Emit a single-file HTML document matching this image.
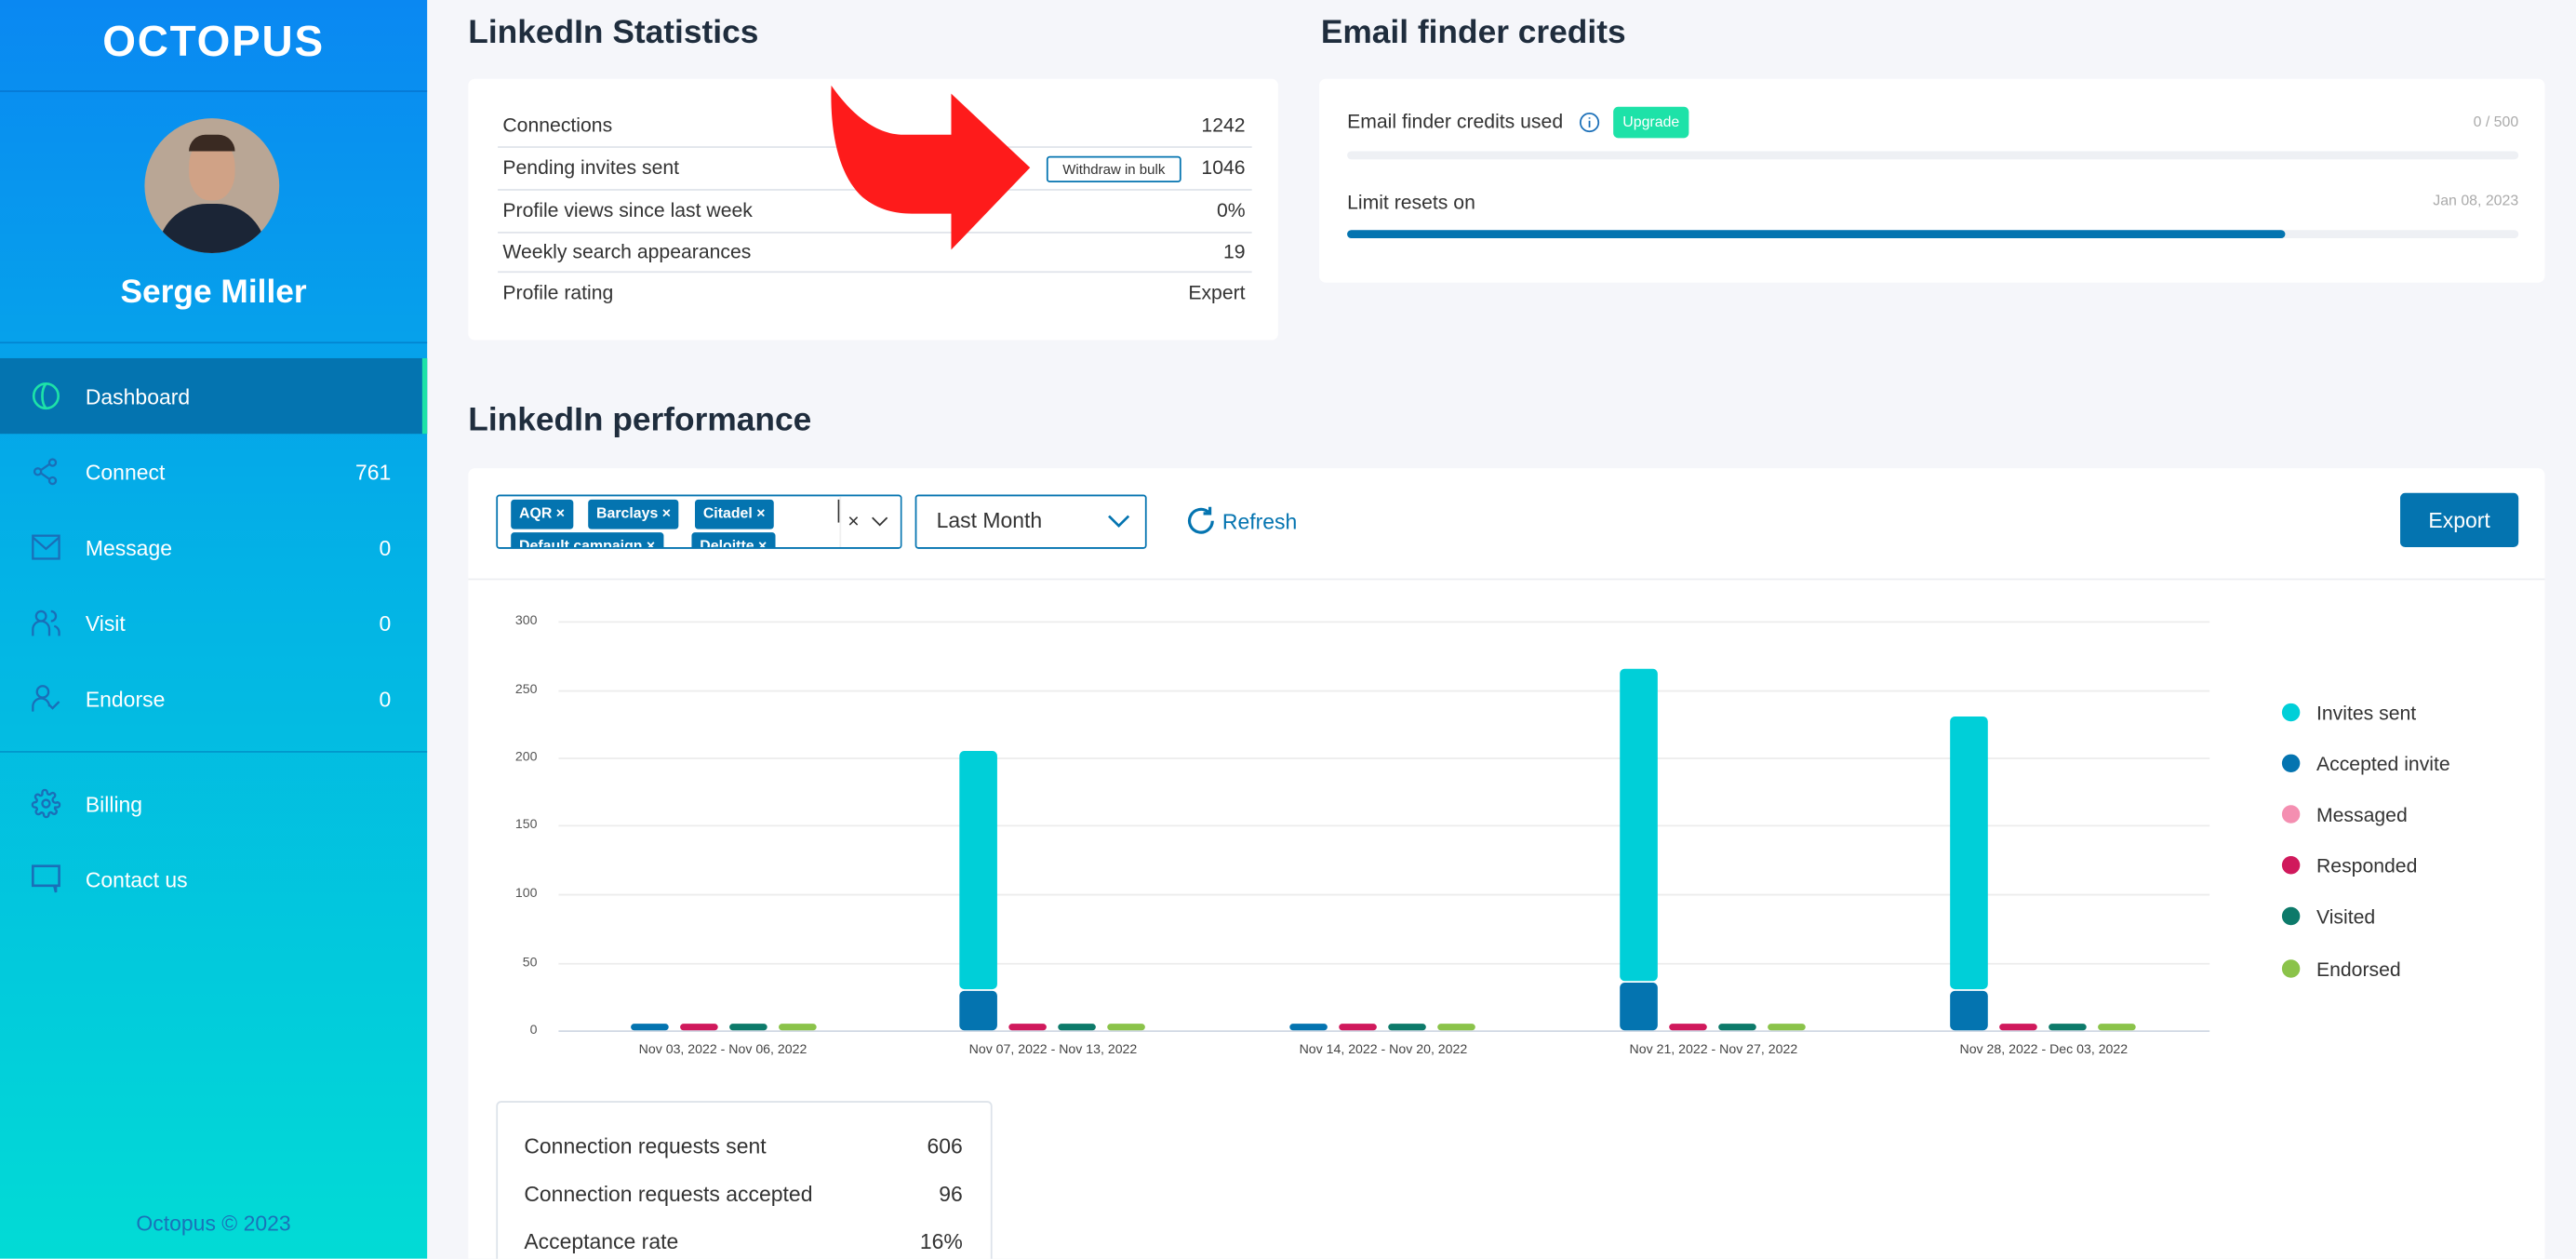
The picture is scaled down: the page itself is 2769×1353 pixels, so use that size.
<!DOCTYPE html>
<html><head><meta charset="utf-8"><style>
*{margin:0;padding:0;box-sizing:border-box}
html,body{width:2769px;height:1353px;overflow:hidden;background:#f5f6fa;font-family:"Liberation Sans",sans-serif}
#w{position:absolute;left:0;top:0;width:1568px;height:766px;overflow:hidden;transform:scale(1.76594);transform-origin:0 0}
.a{position:absolute;white-space:nowrap}
#sb{position:absolute;left:0;top:0;width:260px;height:766px;background:linear-gradient(180deg,#0a88f2 0%,#03b2e6 45%,#02dbd5 100%)}
.hl{position:absolute;left:0;width:260px;height:1px;background:rgba(0,80,160,.35)}
.ni{color:#fff;font-size:13px}
.nc{color:#fff;font-size:13px;right:22px}
.ic{position:absolute;left:19px}
.card{position:absolute;background:#fff;border-radius:4px}
.t{color:#1f2d3d;font-size:20px;font-weight:bold}
.r{color:#333;font-size:12px}
.rl{position:absolute;left:303px;width:459px;height:1px;background:#e0e4ea}
.g{position:absolute;left:340px;width:1005px;height:1px;background:#ececec}
.yl{position:absolute;width:30px;text-align:right;left:297px;font-size:8px;color:#555}
.xl{position:absolute;font-size:8px;color:#444;width:160px;text-align:center}
.b{position:absolute;width:23px;border-radius:3px}
.tag{position:absolute;height:18px;background:#0474b0;color:#fff;font-size:9px;font-weight:bold;border-radius:2px;padding:3px 5px}
.lg{position:absolute;left:1389px;width:11px;height:11px;border-radius:50%}
.lt{position:absolute;left:1410px;font-size:12px;color:#333}
</style></head><body><div id="w">
<div id="sb">
<div class="a" style="left:0;width:260px;text-align:center;top:10px;color:#fff;font-size:26px;font-weight:bold;letter-spacing:1px">OCTOPUS</div>
<div class="hl" style="top:55px"></div>
<div style="position:absolute;left:88px;top:72px;width:82px;height:82px;border-radius:50%;overflow:hidden;background:#b9a695">
<div style="position:absolute;left:27px;top:12px;width:28px;height:38px;border-radius:45%;background:#d0a286"></div>
<div style="position:absolute;left:27px;top:10px;width:28px;height:10px;border-radius:14px 14px 0 0;background:#3a2a22"></div>
<div style="position:absolute;left:8px;top:52px;width:66px;height:40px;border-radius:30px 30px 0 0;background:#1b2536"></div>
</div>
<div class="a" style="left:0;width:260px;text-align:center;top:167px;color:#fff;font-size:20px;font-weight:bold">Serge Miller</div>
<div class="hl" style="top:208px"></div>
<div style="position:absolute;left:0;top:218px;width:260px;height:46px;background:#0474b0;border-right:3px solid #1de2a8"></div>
<svg class="ic" style="top:232px" width="18" height="18" viewBox="0 0 18 18" fill="none" stroke="#1de2a8" stroke-width="1.5"><circle cx="9" cy="9" r="7.5"/><path d="M9 1.5C6 5 6 13 9 16.5"/></svg>
<div class="a ni" style="left:52px;top:234px">Dashboard</div>
<svg class="ic" style="top:278px" width="18" height="18" viewBox="0 0 18 18" fill="none" stroke="#1a6fb8" stroke-width="1.3"><circle cx="13" cy="3.5" r="2"/><circle cx="4" cy="9" r="2"/><circle cx="13" cy="14.5" r="2"/><path d="M6 8L11 4.5M6 10L11 13.5"/></svg>
<div class="a ni" style="left:52px;top:280px">Connect</div><div class="a nc" style="top:280px">761</div>
<svg class="ic" style="top:325px" width="18" height="16" viewBox="0 0 18 16" fill="none" stroke="#1a6fb8" stroke-width="1.3"><rect x="1" y="1" width="16" height="14"/><path d="M1 2L9 9L17 2"/></svg>
<div class="a ni" style="left:52px;top:326px">Message</div><div class="a nc" style="top:326px">0</div>
<svg class="ic" style="top:370px" width="18" height="18" viewBox="0 0 18 18" fill="none" stroke="#1a6fb8" stroke-width="1.3"><circle cx="6" cy="5" r="3"/><path d="M1 17v-4a5 5 0 0110 0v4M12 2a3 3 0 010 6M14 11a4 4 0 013 4v2"/></svg>
<div class="a ni" style="left:52px;top:372px">Visit</div><div class="a nc" style="top:372px">0</div>
<svg class="ic" style="top:416px" width="18" height="18" viewBox="0 0 18 18" fill="none" stroke="#1a6fb8" stroke-width="1.3"><circle cx="7" cy="5" r="3.5"/><path d="M1 17v-3a5 5 0 0110 0M11 13l2 2 4-4"/></svg>
<div class="a ni" style="left:52px;top:418px">Endorse</div><div class="a nc" style="top:418px">0</div>
<div class="hl" style="top:457px"></div>
<svg class="ic" style="top:480px" width="18" height="18" viewBox="0 0 24 24" fill="none" stroke="#1a6fb8" stroke-width="1.8"><circle cx="12" cy="12" r="3"/><path d="M19.4 15a1.6 1.6 0 00.3 1.8l.1.1a2 2 0 11-2.8 2.8l-.1-.1a1.6 1.6 0 00-2.7 1.1V21a2 2 0 11-4 0v-.1a1.6 1.6 0 00-2.7-1.1l-.1.1a2 2 0 11-2.8-2.8l.1-.1A1.6 1.6 0 003 15H3a2 2 0 110-4h.1a1.6 1.6 0 001.1-2.7l-.1-.1a2 2 0 112.8-2.8l.1.1A1.6 1.6 0 009 4.6V3a2 2 0 114 0v.1a1.6 1.6 0 002.7 1.1l.1-.1a2 2 0 112.8 2.8l-.1.1A1.6 1.6 0 0021 11h.1a2 2 0 110 4z"/></svg>
<div class="a ni" style="left:52px;top:482px">Billing</div>
<svg class="ic" style="top:526px" width="18" height="18" viewBox="0 0 18 18" fill="none" stroke="#1a6fb8" stroke-width="1.5"><path d="M1 1h16v12h-2v4l-1-4H1z"/></svg>
<div class="a ni" style="left:52px;top:528px">Contact us</div>
<div class="a" style="left:0;width:260px;text-align:center;top:737px;color:#1a72b8;font-size:13px">Octopus © 2023</div>
</div>

<div class="a t" style="left:285px;top:9px">LinkedIn Statistics</div>
<div class="card" style="left:285px;top:48px;width:493px;height:159px"></div>
<div class="a r" style="left:306px;top:69px">Connections</div><div class="a r" style="right:810px;top:69px">1242</div>
<div class="rl" style="top:89px"></div>
<div class="a r" style="left:306px;top:95px">Pending invites sent</div><div class="a r" style="right:810px;top:95px">1046</div>
<div class="a" style="left:637px;top:95px;width:82px;height:16px;border:1px solid #0474b0;border-radius:2px;font-size:8.5px;color:#333;text-align:center;line-height:14px">Withdraw in bulk</div>
<div class="rl" style="top:115px"></div>
<div class="a r" style="left:306px;top:121px">Profile views since last week</div><div class="a r" style="right:810px;top:121px">0%</div>
<div class="rl" style="top:141px"></div>
<div class="a r" style="left:306px;top:146px">Weekly search appearances</div><div class="a r" style="right:810px;top:146px">19</div>
<div class="rl" style="top:165px"></div>
<div class="a r" style="left:306px;top:171px">Profile rating</div><div class="a r" style="right:810px;top:171px">Expert</div>
<svg style="position:absolute;left:0;top:0" width="800" height="200"><path d="M506 52C505 85 512 108 525 120C535 128 545 130 555 130L579 130L579 152L627 102L579 57L579 82L550 82C535 82 520 72 506 52Z" fill="#fe1b1b"/></svg>

<div class="a t" style="left:804px;top:9px">Email finder credits</div>
<div class="card" style="left:803px;top:48px;width:746px;height:124px"></div>
<div class="a r" style="left:820px;top:67px">Email finder credits used</div>
<svg style="position:absolute;left:961px;top:68px" width="13" height="13" viewBox="0 0 13 13" fill="none" stroke="#1a6fb8" stroke-width="1"><circle cx="6.5" cy="6.5" r="5.5"/><path d="M6.5 5.5v4M6.5 3.5v.8"/></svg>
<div class="a" style="left:982px;top:65px;width:46px;height:19px;background:#1de2a8;border-radius:3px;color:#fff;font-size:9px;text-align:center;line-height:19px">Upgrade</div>
<div class="a" style="right:35px;top:69px;color:#aaa;font-size:9px">0 / 500</div>
<div class="a" style="left:820px;top:92px;width:713px;height:5px;background:#eef0f4;border-radius:3px"></div>
<div class="a r" style="left:820px;top:116px">Limit resets on</div>
<div class="a" style="right:35px;top:117px;color:#aaa;font-size:9px">Jan 08, 2023</div>
<div class="a" style="left:820px;top:140px;width:713px;height:5px;background:#eef0f4;border-radius:3px"></div>
<div class="a" style="left:820px;top:140px;width:571px;height:5px;background:#0474b0;border-radius:3px"></div>

<div class="a t" style="left:285px;top:245px">LinkedIn performance</div>
<div class="card" style="left:285px;top:285px;width:1264px;height:481px;border-radius:4px 4px 0 0"></div>
<div class="a" style="left:285px;top:352px;width:1264px;height:1px;background:#eceef2"></div>
<div class="a" style="left:302px;top:301px;width:247px;height:33px;border:1px solid #0474b0;border-radius:2px;overflow:hidden;background:#fff">
<div class="tag" style="left:8px;top:2px">AQR ×</div><div class="tag" style="left:55px;top:2px">Barclays ×</div><div class="tag" style="left:120px;top:2px">Citadel ×</div>
<div class="tag" style="left:8px;top:22px">Default campaign ×</div><div class="tag" style="left:118px;top:22px">Deloitte ×</div>
<div style="position:absolute;left:207px;top:2px;width:1px;height:14px;background:#333"></div>
<div style="position:absolute;left:208px;top:0;width:40px;height:33px;background:#fff;border-left:1px solid #f0f0f0"></div>
<div style="position:absolute;left:213px;top:8px;font-size:12px;color:#333">×</div>
<svg style="position:absolute;left:227px;top:12px" width="11" height="7"><path d="M1 1l4.5 4.5L10 1" fill="none" stroke="#333" stroke-width="1"/></svg>
</div>
<div class="a" style="left:557px;top:301px;width:141px;height:33px;border:1px solid #0474b0;border-radius:2px;background:#fff"></div>
<div class="a" style="left:570px;top:309px;font-size:13px;color:#333">Last Month</div>
<svg style="position:absolute;left:674px;top:313px" width="14" height="8"><path d="M1 1l6 6 6-6" fill="none" stroke="#0474b0" stroke-width="1.5"/></svg>
<svg style="position:absolute;left:721px;top:307px" width="20" height="20" viewBox="0 0 20 20" fill="none" stroke="#0474b0" stroke-width="1.8"><path d="M17 10a7 7 0 11-2.5-5.4"/><path d="M15.5 1.5v4h-4"/></svg>
<div class="a" style="left:744px;top:310px;font-size:13px;color:#0474b0">Refresh</div>
<div class="a" style="left:1461px;top:300px;width:72px;height:33px;background:#0474b0;border-radius:3px;color:#fff;font-size:13px;text-align:center;line-height:33px">Export</div>

<div class="g" style="top:378px"></div><div class="g" style="top:420px"></div><div class="g" style="top:461px"></div><div class="g" style="top:502px"></div><div class="g" style="top:544px"></div><div class="g" style="top:586px"></div><div class="g" style="top:627px;background:#d0d8e4"></div>
<div class="yl" style="top:373px">300</div><div class="yl" style="top:415px">250</div><div class="yl" style="top:456px">200</div><div class="yl" style="top:497px">150</div><div class="yl" style="top:539px">100</div><div class="yl" style="top:581px">50</div><div class="yl" style="top:622px">0</div>
<div class="xl" style="left:360px;top:634px">Nov 03, 2022 - Nov 06, 2022</div>
<div class="xl" style="left:561px;top:634px">Nov 07, 2022 - Nov 13, 2022</div>
<div class="xl" style="left:762px;top:634px">Nov 14, 2022 - Nov 20, 2022</div>
<div class="xl" style="left:963px;top:634px">Nov 21, 2022 - Nov 27, 2022</div>
<div class="xl" style="left:1164px;top:634px">Nov 28, 2022 - Dec 03, 2022</div>
<div class="b" style="left:384px;top:623px;height:4px;background:#0474b0"></div><div class="b" style="left:414px;top:623px;height:4px;background:#d0195c"></div><div class="b" style="left:444px;top:623px;height:4px;background:#0d7a6a"></div><div class="b" style="left:474px;top:623px;height:4px;background:#8bc34a"></div>
<div class="b" style="left:584px;top:457px;height:145px;background:#00cfd8"></div><div class="b" style="left:584px;top:603px;height:24px;background:#0474b0"></div>
<div class="b" style="left:614px;top:623px;height:4px;background:#d0195c"></div><div class="b" style="left:644px;top:623px;height:4px;background:#0d7a6a"></div><div class="b" style="left:674px;top:623px;height:4px;background:#8bc34a"></div>
<div class="b" style="left:785px;top:623px;height:4px;background:#0474b0"></div><div class="b" style="left:815px;top:623px;height:4px;background:#d0195c"></div><div class="b" style="left:845px;top:623px;height:4px;background:#0d7a6a"></div><div class="b" style="left:875px;top:623px;height:4px;background:#8bc34a"></div>
<div class="b" style="left:986px;top:407px;height:190px;background:#00cfd8"></div><div class="b" style="left:986px;top:598px;height:29px;background:#0474b0"></div>
<div class="b" style="left:1016px;top:623px;height:4px;background:#d0195c"></div><div class="b" style="left:1046px;top:623px;height:4px;background:#0d7a6a"></div><div class="b" style="left:1076px;top:623px;height:4px;background:#8bc34a"></div>
<div class="b" style="left:1187px;top:436px;height:166px;background:#00cfd8"></div><div class="b" style="left:1187px;top:603px;height:24px;background:#0474b0"></div>
<div class="b" style="left:1217px;top:623px;height:4px;background:#d0195c"></div><div class="b" style="left:1247px;top:623px;height:4px;background:#0d7a6a"></div><div class="b" style="left:1277px;top:623px;height:4px;background:#8bc34a"></div>

<div class="lg" style="top:428px;background:#00cfd8"></div><div class="lt" style="top:427px">Invites sent</div>
<div class="lg" style="top:459px;background:#0474b0"></div><div class="lt" style="top:458px">Accepted invite</div>
<div class="lg" style="top:490px;background:#f48fb1"></div><div class="lt" style="top:489px">Messaged</div>
<div class="lg" style="top:521px;background:#d0195c"></div><div class="lt" style="top:520px">Responded</div>
<div class="lg" style="top:552px;background:#0d7a6a"></div><div class="lt" style="top:551px">Visited</div>
<div class="lg" style="top:584px;background:#8bc34a"></div><div class="lt" style="top:583px">Endorsed</div>

<div class="a" style="left:302px;top:670px;width:302px;height:110px;border:1px solid #dde3ea;border-radius:3px;background:#fff"></div>
<div class="a" style="left:319px;top:690px;font-size:13px;color:#333">Connection requests sent</div><div class="a" style="right:982px;top:690px;font-size:13px;color:#333">606</div>
<div class="a" style="left:319px;top:719px;font-size:13px;color:#333">Connection requests accepted</div><div class="a" style="right:982px;top:719px;font-size:13px;color:#333">96</div>
<div class="a" style="left:319px;top:748px;font-size:13px;color:#333">Acceptance rate</div><div class="a" style="right:982px;top:748px;font-size:13px;color:#333">16%</div>
</div></body></html>
